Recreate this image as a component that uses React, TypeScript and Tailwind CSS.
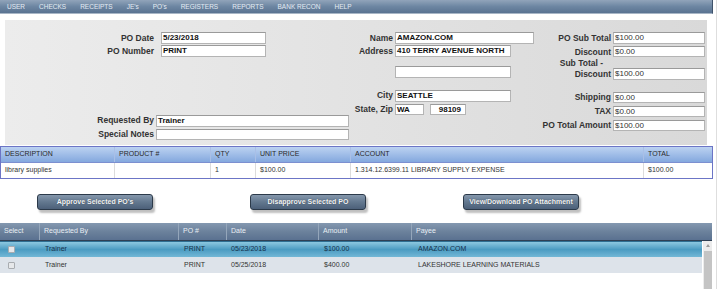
import React from "react";

const NAV = ["USER", "CHECKS", "RECEIPTS", "JE's", "PO's", "REGISTERS", "REPORTS", "BANK RECON", "HELP"];

const LINE_COLS = [
  { label: "DESCRIPTION", value: "library supplies" },
  { label: "PRODUCT #", value: "" },
  { label: "QTY", value: "1" },
  { label: "UNIT PRICE", value: "$100.00" },
  { label: "ACCOUNT", value: "1.314.12.6399.11 LIBRARY SUPPLY EXPENSE" },
  { label: "TOTAL", value: "$100.00" },
];

const GRID_HEAD = ["Select", "Requested By", "PO #", "Date", "Amount", "Payee"];

const ROWS = [
  { by: "Trainer", po: "PRINT", date: "05/23/2018", amount: "$100.00", payee: "AMAZON.COM", active: true },
  { by: "Trainer", po: "PRINT", date: "05/25/2018", amount: "$400.00", payee: "LAKESHORE LEARNING MATERIALS", active: false },
];

function Box({ w, h = "h-[12px]", value = "", bold = true, right = false }: { w: string; h?: string; value?: string; bold?: boolean; right?: boolean }) {
  return (
    <div
      className={`${w} ${h} shrink-0 bg-white border border-[#b4b4b4] border-t-[#9a9a9a] text-[8px] leading-[9px] text-[#111] px-[1px] overflow-hidden whitespace-nowrap ${
        bold ? "font-bold" : "font-normal text-[#333]"
      } ${right ? "text-right pr-[4px]" : ""}`}
    >
      {value}
    </div>
  );
}

function Label({ w, children }: { w: string; children: React.ReactNode }) {
  return <div className={`${w} shrink-0 text-right text-[8.5px] font-bold text-[#333] whitespace-nowrap`}>{children}</div>;
}

function Button({ children }: { children: React.ReactNode }) {
  return (
    <div className="w-[116px] h-[16px] shrink-0 rounded-[3px] border border-[#2c3a4a] bg-gradient-to-b from-[#8597ac] via-[#63788f] to-[#4c6079] shadow-[2px_3px_2px_rgba(0,0,0,0.25)] flex items-center justify-center text-[7px] font-bold text-[#f2f4f6] [text-shadow:0_0_1px_rgba(0,0,0,0.5)]">
      {children}
    </div>
  );
}

export default function App() {
  return (
    <div className="flex w-[720px] h-[289px] bg-white overflow-hidden font-['Liberation_Sans',Arial,sans-serif]">
      <div className="w-[714px] shrink-0 flex flex-col">
        {/* Top menu */}
        <div className="w-[713px] h-[14px] flex items-center gap-[14px] pl-[7px] bg-gradient-to-b from-[#91a4ba] via-[#6d86a2] to-[#5a7391] border-r border-[#3f536b] border-b border-b-[#a8b6c6] text-[6.5px] text-[#e4ebf3]">
          {NAV.map((n) => (
            <span key={n}>{n}</span>
          ))}
        </div>

        {/* PO header panel */}
        <div className="ml-[5px] mt-[6px] w-[702px] h-[127px] pt-[12px] flex bg-gradient-to-r from-[#ececec] to-[#d9d9d9]">
          {/* left */}
          <div className="w-[345px] shrink-0 flex flex-col">
            <div className="flex items-center">
              <Label w="w-[149px]">PO Date</Label>
              <div className="ml-[7px]"><Box w="w-[105px]" value="5/23/2018" /></div>
            </div>
            <div className="flex items-center">
              <Label w="w-[149px]">PO Number</Label>
              <div className="ml-[7px]"><Box w="w-[105px]" value="PRINT" /></div>
            </div>
            <div className="flex items-center mt-[57px]">
              <Label w="w-[149px]">Requested By</Label>
              <div className="ml-[2px]"><Box w="w-[193px]" value="Trainer" /></div>
            </div>
            <div className="flex items-center mt-[1px]">
              <Label w="w-[149px]">Special Notes</Label>
              <div className="ml-[2px]"><Box w="w-[193px]" h="h-[11px]" /></div>
            </div>
          </div>

          {/* middle */}
          <div className="w-[184px] shrink-0 flex flex-col">
            <div className="flex items-center">
              <Label w="w-[43px]">Name</Label>
              <div className="ml-[2px]"><Box w="w-[139px]" value="AMAZON.COM" /></div>
            </div>
            <div className="flex items-center">
              <Label w="w-[43px]">Address</Label>
              <div className="ml-[2px]"><Box w="w-[116px]" value="410 TERRY AVENUE NORTH" /></div>
            </div>
            <div className="flex items-center mt-[9px]">
              <div className="w-[45px] shrink-0" />
              <Box w="w-[116px]" />
            </div>
            <div className="flex items-center mt-[11px]">
              <Label w="w-[43px]">City</Label>
              <div className="ml-[2px]"><Box w="w-[116px]" value="SEATTLE" /></div>
            </div>
            <div className="flex items-center mt-[1px]">
              <Label w="w-[43px]">State, Zip</Label>
              <div className="ml-[2px]"><Box w="w-[29px]" h="h-[11px]" value="WA" /></div>
              <div className="ml-[6px]"><Box w="w-[36px]" h="h-[11px]" value="98109" right /></div>
            </div>
          </div>

          {/* right */}
          <div className="w-[173px] shrink-0 flex flex-col">
            <div className="flex items-center">
              <Label w="w-[77px]">PO Sub Total</Label>
              <div className="ml-[2px]"><Box w="w-[92px]" value="$100.00" bold={false} /></div>
            </div>
            <div className="flex items-center mt-[1px]">
              <Label w="w-[77px]">Discount</Label>
              <div className="ml-[2px]"><Box w="w-[92px]" h="h-[11px]" value="$0.00" bold={false} /></div>
            </div>
            <div className="flex items-end h-[22px]">
              <div className="w-[77px] shrink-0 text-right text-[8.5px] font-bold text-[#333] leading-[11px]">
                <div className="pr-[8px]">Sub Total -</div>
                <div>Discount</div>
              </div>
              <div className="ml-[2px]"><Box w="w-[92px]" value="$100.00" bold={false} /></div>
            </div>
            <div className="flex items-center mt-[11px]">
              <Label w="w-[77px]">Shipping</Label>
              <div className="ml-[2px]"><Box w="w-[92px]" h="h-[11px]" value="$0.00" bold={false} /></div>
            </div>
            <div className="flex items-center mt-[1px]">
              <Label w="w-[77px]">TAX</Label>
              <div className="ml-[2px]"><Box w="w-[92px]" h="h-[11px]" value="$0.00" bold={false} /></div>
            </div>
            <div className="flex items-center mt-[1px]">
              <Label w="w-[77px]">PO Total Amount</Label>
              <div className="ml-[2px]"><Box w="w-[92px]" h="h-[11px]" value="$100.00" bold={false} /></div>
            </div>
          </div>
        </div>

        {/* line items */}
        <div className="mt-[1px] w-[713px] border border-[#6c75c6] text-[7px]">
          <div className="grid grid-cols-[114px_96px_45px_95px_293px_1fr] h-[16px] bg-gradient-to-b from-[#bcd2f1] to-[#84a8de] border-b border-[#7c8fd0] text-[#2a2a2a]">
            {LINE_COLS.map((c, i) => (
              <div key={c.label} className={`flex items-center pl-[4px] ${i < 5 ? "border-r border-[#a9bfe6]" : ""}`}>
                {c.label}
              </div>
            ))}
          </div>
          <div className="grid grid-cols-[114px_96px_45px_95px_293px_1fr] h-[15px] bg-white text-[#333]">
            {LINE_COLS.map((c, i) => (
              <div key={c.label} className={`flex items-center pl-[4px] whitespace-nowrap ${i < 5 ? "border-r border-[#dcdcdc]" : ""}`}>
                {c.value}
              </div>
            ))}
          </div>
        </div>

        {/* actions */}
        <div className="mt-[15px] flex pl-[37px] gap-[97px]">
          <Button>Approve Selected PO's</Button>
          <Button>Disapprove Selected PO</Button>
          <Button>View/Download PO Attachment</Button>
        </div>

        {/* PO list */}
        <div className="mt-[13px] w-[712px] text-[7px]">
          <div className="grid grid-cols-[40px_139px_48px_92px_93px_1fr] h-[18px] bg-gradient-to-b from-[#8498b0] via-[#6c829c] to-[#5a7190] border-b border-[#2f4054] text-[#e8eef4]">
            {GRID_HEAD.map((h, i) => (
              <div key={h} className={`flex items-center pl-[4px] ${i < 5 ? "border-r border-[#94a6ba]" : ""}`}>
                {h}
              </div>
            ))}
          </div>
          <div className="flex">
            <div className="w-[702px] shrink-0">
              {ROWS.map((r) => (
                <div
                  key={r.date}
                  className={`grid grid-cols-[40px_139px_48px_92px_93px_1fr] h-[16px] items-center ${
                    r.active
                      ? "bg-gradient-to-b from-[#8cc8e0] via-[#4b9cc2] to-[#72b7d6] text-[#16304a] border-t border-[#2f6f92]"
                      : "bg-[#dde3ea] text-[#333]"
                  }`}
                >
                  <div className="pl-[8px]">
                    <div className="w-[7px] h-[7px] rounded-[1px] border border-[#a8acb0] bg-[#e6e8ea]" />
                  </div>
                  <div className="pl-[5px]">{r.by}</div>
                  <div className="pl-[5px]">{r.po}</div>
                  <div className="pl-[4px]">{r.date}</div>
                  <div className="pl-[5px]">{r.amount}</div>
                  <div className="pl-[6px] whitespace-nowrap">{r.payee}</div>
                </div>
              ))}
            </div>
            <div className="w-[10px] ml-[1px] h-[48px] bg-[#ececec] flex flex-col items-center">
              <div className="mt-[3px] w-0 h-0 border-l-[2.5px] border-r-[2.5px] border-b-[3px] border-l-transparent border-r-transparent border-b-[#9a9a9a]" />
              <div className="mt-[4px] w-[8px] flex-1 bg-[#c4c4c4]" />
            </div>
          </div>
        </div>
      </div>
      <div className="ml-[2px] w-[1px] h-full bg-[#dedede]" />
    </div>
  );
}
